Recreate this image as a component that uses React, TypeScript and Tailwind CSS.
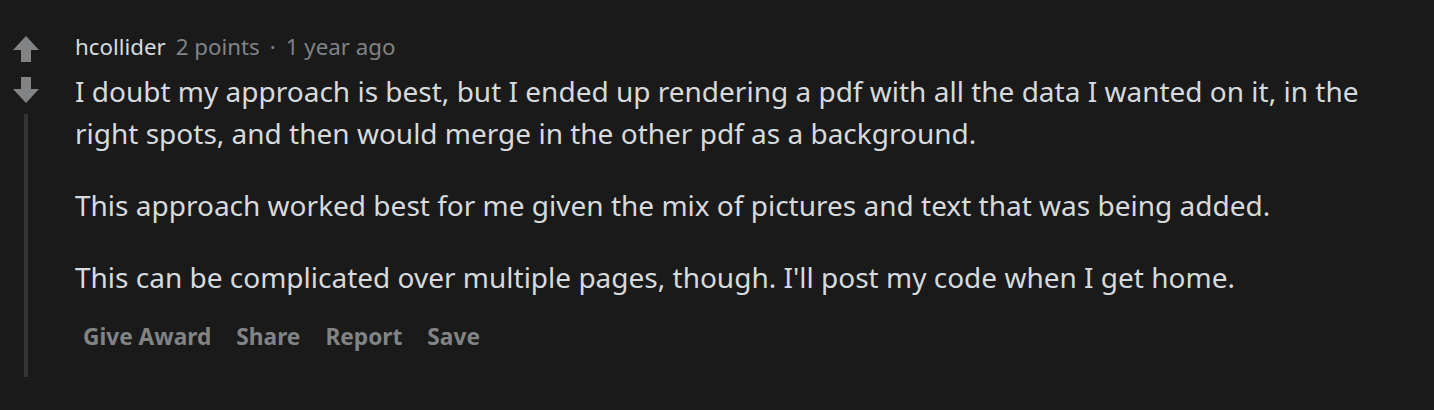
const Flecha = ({ abajo }: { abajo?: boolean }) => (
  <svg
    width="26"
    height="26"
    viewBox="0 0 26 26"
    className={abajo ? "rotate-180" : ""}
  >
    <path d="M13 0 L26 14 L18 14 L18 26 L8 26 L8 14 L0 14 Z" fill="#818384" />
  </svg>
);

const App = () => {
  const acciones = ["Give Award", "Share", "Report", "Save"];

  return (
    <div className="min-h-screen w-full bg-[#1a1a1b] font-['Noto_Sans',sans-serif]">
      <div className="flex pt-[36px]">
        {/* Columna de votos con el hilo vertical */}
        <div className="flex w-[52px] flex-col items-center">
          <Flecha />
          <div className="mt-[15px]">
            <Flecha abajo />
          </div>
          <div className="mt-[11px] h-[263px] w-[4px] bg-[#343536]" />
        </div>

        <div className="ml-[23px] flex-1">
          <div className="-mt-[4px] flex items-baseline text-[22.3px] leading-[30px]">
            <span className="text-[#d7dadc]">hcollider</span>
            <span className="ml-[10px] text-[#818384]">2 points</span>
            <span className="mx-[10px] text-[#818384]">·</span>
            <span className="text-[#818384]">1 year ago</span>
          </div>

          <div className="mt-[8px] max-w-[1300px] text-[28px] leading-[42px] text-[#d7dadc]">
            <p>
              I doubt my approach is best, but I ended up rendering a pdf with all the data I
              wanted on it, in the right spots, and then would merge in the other pdf as a
              background.
            </p>
            <p className="mt-[30px]">
              This approach worked best for me given the mix of pictures and text that was being
              added.
            </p>
            <p className="mt-[30px]">
              This can be complicated over multiple pages, though. I'll post my code when I get
              home.
            </p>
          </div>

          <div className="mt-[24px] flex gap-[25px] pl-[8px] text-[22.7px] font-bold leading-[30px] text-[#818384]">
            {acciones.map((accion) => (
              <span key={accion}>{accion}</span>
            ))}
          </div>
        </div>
      </div>
    </div>
  );
};

export default App;
